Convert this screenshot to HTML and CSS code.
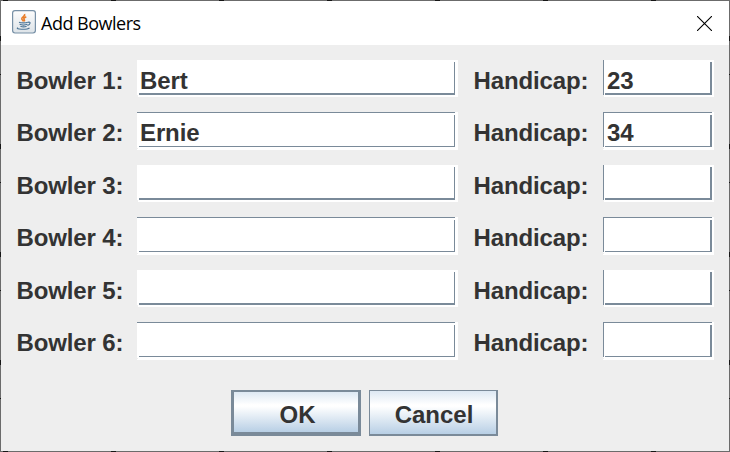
FILE: index.html
```html
<!DOCTYPE html>
<html lang="en">
<head>
<meta charset="utf-8">
<title>Add Bowlers</title>
<link rel="stylesheet" href="styles.css">
</head>
<body>
<div class="window">
  <header class="titlebar">
    <svg class="app-icon" width="24" height="24" viewBox="0 0 24 24" fill="none">
      <defs><linearGradient id="tile" x1="0" y1="0" x2="0" y2="1"><stop offset="0" stop-color="#fdfdfd"/><stop offset="1" stop-color="#dde3e8"/></linearGradient></defs>
      <rect x=".6" y=".6" width="22.8" height="22.4" rx="2.4" fill="url(#tile)" stroke="#7790a6" stroke-width="1.2"/>
      <path d="M12.6 4c1.2 2.4-3.5 3.3-2.8 5.1.2.7 1.3 1.3 1.6 2.3M14.3 6.7c-2.6 1.1-3 1.9-2 3 .5.6.2 1.1-.2 1.6" stroke="#e87c28" stroke-width="1.6"/>
      <path d="M7 12.3c2 .8 7 .7 8.8-.1M7.6 14.3c2 .8 6 .7 7.8 0M8.4 16.3c1.8.6 4.8.5 6.2-.1M16 12.3c3-.8 2.6 2.2-.6 3.2M6 17.7c-4 1.8 9.5 2.3 11.5.1" stroke="#4d7596" stroke-width="1.2"/>
    </svg>
    <span class="title">Add Bowlers</span>
    <svg class="close" width="15" height="15" viewBox="0 0 15 15"><path d="M0 0 15 15M15 0 0 15" stroke="#000" stroke-width="1.1"/></svg>
  </header>
  <main class="form">
    <div class="row"><label>Bowler 1:</label><div class="field name">Bert</div><label>Handicap:</label><div class="field handicap">23</div></div>
    <div class="row"><label>Bowler 2:</label><div class="field name">Ernie</div><label>Handicap:</label><div class="field handicap">34</div></div>
    <div class="row"><label>Bowler 3:</label><div class="field name"></div><label>Handicap:</label><div class="field handicap"></div></div>
    <div class="row"><label>Bowler 4:</label><div class="field name"></div><label>Handicap:</label><div class="field handicap"></div></div>
    <div class="row"><label>Bowler 5:</label><div class="field name"></div><label>Handicap:</label><div class="field handicap"></div></div>
    <div class="row"><label>Bowler 6:</label><div class="field name"></div><label>Handicap:</label><div class="field handicap"></div></div>
  </main>
  <footer class="actions">
    <button class="ok">OK</button>
    <button class="cancel">Cancel</button>
  </footer>
</div>
</body>
</html>
```
FILE: styles.css
```css
* { box-sizing: border-box; }
body { margin: 0; }
.window {
  width: 730px;
  height: 452px;
  padding: 1px;
  overflow: hidden;
  color: #333;
  font: bold 24px/36px "Liberation Sans", Arial, sans-serif;
  background:
    linear-gradient(#eee, #eee) 1px 1px / 728px 450px no-repeat,
    repeating-linear-gradient(90deg, #6b6b6b 0 3px, #161616 3px 8px, #6b6b6b 8px 108px) 0 0 / 730px 1px no-repeat,
    repeating-linear-gradient(90deg, #6b6b6b 0 3px, #161616 3px 8px, #6b6b6b 8px 108px) 0 451px / 730px 1px no-repeat,
    repeating-linear-gradient(#6b6b6b 0 36px, #161616 36px 41px, #6b6b6b 41px 74px, #161616 74px 75px, #6b6b6b 75px 108px);
}
.titlebar {
  display: flex;
  align-items: center;
  height: 44px;
  padding: 0 17px 0 11px;
  background: #fff;
}
.app-icon { margin-top: -3px; }
.title {
  margin-left: 5px;
  color: #000;
  font: 18px/24px "Open Sans", "Noto Sans", sans-serif;
  letter-spacing: -.5px;
}
.close { margin-left: auto; }
.form {
  display: grid;
  grid-template-rows: 52px 53px 52px 53px 52px 53px;
  padding: 15px 15px 0;
}
.row {
  display: grid;
  grid-template-columns: 121px 321px 145px 111px;
  align-items: start;
}
label { padding: 3px 0 0 .5px; letter-spacing: -.12px; }
.row label:nth-of-type(2) { padding-left: 15.5px; }
.field {
  --line: #7a8a99;
  position: relative;
  height: 37px;
  padding: 3px 0 0 3px;
  background: #fff;
  letter-spacing: -.12px;
}
/* The shadow lines stop short of the white highlight at the corners. */
.handicap {
  background: linear-gradient(var(--line), var(--line)) 0 0 / 1px 35px no-repeat, #fff;
}
.row:nth-child(even) .field {
  height: 38px;
  background: linear-gradient(var(--line), var(--line)) 0 0 / calc(100% - 3px) 1px no-repeat, #fff;
}
.row:nth-child(even) .handicap {
  background:
    linear-gradient(var(--line), var(--line)) 0 0 / calc(100% - 2px) 1px no-repeat,
    linear-gradient(var(--line), var(--line)) 0 0 / 1px 35px no-repeat,
    #fff;
}
.handicap { padding-left: 4px; }
.field::after {
  content: "";
  position: absolute;
  top: 2px;
  right: 3px;
  bottom: 2px;
  left: 2px;
  border: solid var(--line);
  border-width: 0 1px 2px 0;
}
.handicap::after { right: 2px; border-right-width: 2px; }
.row:nth-child(even) .field::after { top: 3px; bottom: 3px; border-bottom-width: 1px; }
.field::before {
  content: "";
  position: absolute;
  left: 0;
  bottom: 0;
  width: 1px;
  height: 2px;
  background: #eee;
}
.row:nth-child(even) .field::before { bottom: 1px; height: 1px; }
.actions {
  display: flex;
  gap: 8px;
  padding: 15px 0 0 230px;
}
button {
  height: 46px;
  padding: 5px 0 0;
  border: solid #7a8a99;
  border-radius: 0;
  background: linear-gradient(#dde8f3 0, #fff 32%, #fff 36%, #b8cfe5 100%);
  color: #333;
  font: inherit;
  line-height: 36px;
}
.ok { width: 130px; border-width: 2px 3px 4px; padding-left: 3px; }
.cancel { width: 129px; border-width: 1px 2px 2px 1px; padding-left: 2px; }
```
